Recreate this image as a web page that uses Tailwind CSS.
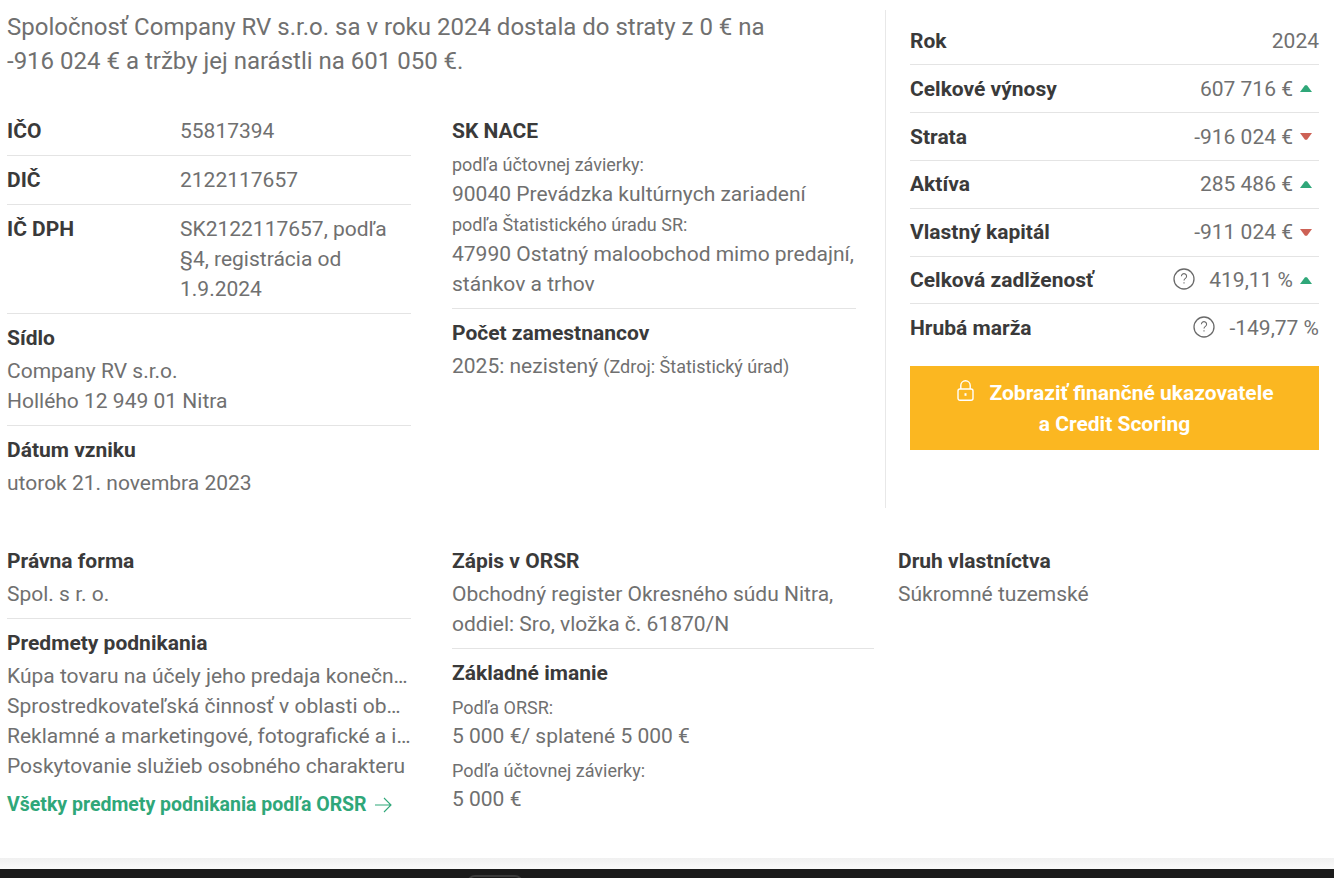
<!DOCTYPE html>
<html lang="sk">

<head>
  <meta charset="UTF-8">
  <meta name="viewport" content="width=device-width, initial-scale=1.0">
  <script src="https://cdn.jsdelivr.net/npm/@tailwindcss/browser@4"></script>
</head>

<body class="bg-white font-['Roboto',sans-serif] text-[21px] leading-[30px] text-[#707070] h-[878px] overflow-hidden">
  <div class="h-[858px] pl-[7px] pr-[15px]">
    <!-- top part -->
    <div class="flex pt-[10px] h-[508px]">
      <div class="w-[878px] shrink-0 border-r border-[#e8e8e8] box-content">
        <p class="text-[24px] leading-[34px] w-[800px]">Spoločnosť Company RV s.r.o. sa v roku 2024 dostala do straty z 0 € na -916 024 € a tržby jej narástli na 601 050 €.</p>
        <div class="flex mt-[29px]">
          <div class="w-[404px]">
            <div class="flex py-[9px] border-b border-[#e4e4e4]">
              <div class="w-[173px] shrink-0 font-bold text-[#3a3a3a]">IČO</div>
              <div>55817394</div>
            </div>
            <div class="flex py-[9px] border-b border-[#e4e4e4]">
              <div class="w-[173px] shrink-0 font-bold text-[#3a3a3a]">DIČ</div>
              <div>2122117657</div>
            </div>
            <div class="flex py-[9px] border-b border-[#e4e4e4]">
              <div class="w-[173px] shrink-0 font-bold text-[#3a3a3a]">IČ DPH</div>
              <div>SK2122117657, podľa §4, registrácia od 1.9.2024</div>
            </div>
            <div class="py-[9px] border-b border-[#e4e4e4]">
              <div class="font-bold text-[#3a3a3a] mb-[3px]">Sídlo</div>
              <div>Company RV s.r.o.<br>Hollého 12 949 01 Nitra</div>
            </div>
            <div class="py-[9px]">
              <div class="font-bold text-[#3a3a3a] mb-[3px]">Dátum vzniku</div>
              <div>utorok 21. novembra 2023</div>
            </div>
          </div>
          <div class="w-[404px] ml-[41px]">
            <div class="py-[9px] border-b border-[#e4e4e4]">
              <div class="font-bold text-[#3a3a3a] mb-[3px]">SK NACE</div>
              <div class="text-[18px] leading-[32px] -mb-[2px]">podľa účtovnej závierky:</div>
              <div>90040 Prevádzka kultúrnych zariadení</div>
              <div class="text-[18px] leading-[32px] -mb-[2px]">podľa Štatistického úradu SR:</div>
              <div>47990 Ostatný maloobchod mimo predajní, stánkov a trhov</div>
            </div>
            <div class="py-[9px]">
              <div class="font-bold text-[#3a3a3a] mb-[3px]">Počet zamestnancov</div>
              <div>2025: nezistený <span class="text-[18px]">(Zdroj: Štatistický úrad)</span></div>
            </div>
          </div>
        </div>
      </div>
      <div class="w-[409px] ml-[24px]">
        <div class="flex justify-between items-center h-[55px] pt-[7px] border-b border-[#e4e4e4]">
          <span class="font-bold text-[#3a3a3a]">Rok</span><span>2024</span>
        </div>
        <div class="flex justify-between items-center h-[48px] border-b border-[#e4e4e4]">
          <span class="font-bold text-[#3a3a3a]">Celkové výnosy</span>
          <span class="flex items-center">607 716 €
            <svg class="ml-[7px] mr-[7px]" width="12" height="7" viewBox="0 0 12 7"><path d="M5 .2h2L12 7H0Z" fill="#2fa779"/></svg>
          </span>
        </div>
        <div class="flex justify-between items-center h-[48px] border-b border-[#e4e4e4]">
          <span class="font-bold text-[#3a3a3a]">Strata</span>
          <span class="flex items-center">-916 024 €
            <svg class="ml-[7px] mr-[7px]" width="12" height="7" viewBox="0 0 12 7"><path d="M5 6.8h2L12 0H0Z" fill="#cd6155"/></svg>
          </span>
        </div>
        <div class="flex justify-between items-center h-[48px] pb-[1px] border-b border-[#e4e4e4]">
          <span class="font-bold text-[#3a3a3a]">Aktíva</span>
          <span class="flex items-center">285 486 €
            <svg class="ml-[7px] mr-[7px]" width="12" height="7" viewBox="0 0 12 7"><path d="M5 .2h2L12 7H0Z" fill="#2fa779"/></svg>
          </span>
        </div>
        <div class="flex justify-between items-center h-[48px] pb-[1px] border-b border-[#e4e4e4]">
          <span class="font-bold text-[#3a3a3a]">Vlastný kapitál</span>
          <span class="flex items-center">-911 024 €
            <svg class="ml-[7px] mr-[7px]" width="12" height="7" viewBox="0 0 12 7"><path d="M5 6.8h2L12 0H0Z" fill="#cd6155"/></svg>
          </span>
        </div>
        <div class="flex justify-between items-center h-[47px] border-b border-[#e4e4e4]">
          <span class="font-bold text-[#3a3a3a]">Celková zadlženosť</span>
          <span class="flex items-center">
            <svg class="mr-[14px] -mt-[3px]" width="22" height="22" viewBox="0 0 22 22" fill="none" stroke="#6a6a6a" stroke-width="1.3"><circle cx="11" cy="11" r="10"/><path d="M8.4 8.2a2.6 2.6 0 1 1 4 2.2c-.9.6-1.4 1-1.4 2.1" stroke-width="1.1"/><path d="M11 14.2v1.3" stroke-width="1.1"/></svg>
            419,11 %
            <svg class="ml-[7px] mr-[7px]" width="12" height="7" viewBox="0 0 12 7"><path d="M5 .2h2L12 7H0Z" fill="#2fa779"/></svg>
          </span>
        </div>
        <div class="flex justify-between items-center h-[48px]">
          <span class="font-bold text-[#3a3a3a]">Hrubá marža</span>
          <span class="flex items-center">
            <svg class="mr-[14px] -mt-[3px]" width="22" height="22" viewBox="0 0 22 22" fill="none" stroke="#6a6a6a" stroke-width="1.3"><circle cx="11" cy="11" r="10"/><path d="M8.4 8.2a2.6 2.6 0 1 1 4 2.2c-.9.6-1.4 1-1.4 2.1" stroke-width="1.1"/><path d="M11 14.2v1.3" stroke-width="1.1"/></svg>
            -149,77 %
          </span>
        </div>
        <div class="mt-[14px] bg-[#fbb721] text-white font-bold text-center h-[84px] pt-[12px] leading-[31px]">
          <svg class="inline-block ml-[2px] mr-[15px] align-[-1px]" width="17" height="21" viewBox="0 0 17 21" fill="none" stroke="#fff" stroke-width="1.4"><rect x="1" y="9" width="15" height="11.3" rx="2"/><path d="M3.8 9V5.5a4.7 4.7 0 0 1 9.4 0V9"/><path d="M8.5 13.2v2.6" stroke-width="2"/></svg>Zobraziť finančné ukazovatele<br>a Credit Scoring
        </div>
      </div>
    </div>

    <!-- bottom part -->
    <div class="flex mt-[29px]">
      <div class="w-[404px]">
        <div class="py-[9px] border-b border-[#e4e4e4]">
          <div class="font-bold text-[#3a3a3a] mb-[3px]">Právna forma</div>
          <div>Spol. s r. o.</div>
        </div>
        <div class="py-[9px]">
          <div class="font-bold text-[#3a3a3a] mb-[3px]">Predmety podnikania</div>
          <div class="truncate">Kúpa tovaru na účely jeho predaja konečnému spotrebiteľovi</div>
          <div class="truncate">Sprostredkovateľská činnosť v oblasti obchodu a služieb</div>
          <div class="truncate">Reklamné a marketingové, fotografické a iné služby</div>
          <div class="truncate">Poskytovanie služieb osobného charakteru</div>
          <div class="mt-[9px] text-[19.5px] font-bold text-[#2fa779] flex items-center">Všetky predmety podnikania podľa ORSR
            <svg class="ml-[8px]" width="17" height="16" viewBox="0 0 17 16" fill="none" stroke="#2fa779" stroke-width="1.1"><path d="M0 8H16M9 1l7 7-7 7"/></svg>
          </div>
        </div>
      </div>
      <div class="w-[422px] ml-[41px]">
        <div class="py-[9px] border-b border-[#e4e4e4]">
          <div class="font-bold text-[#3a3a3a] mb-[3px]">Zápis v ORSR</div>
          <div>Obchodný register Okresného súdu Nitra,<br>oddiel: Sro, vložka č. 61870/N</div>
        </div>
        <div class="py-[9px]">
          <div class="font-bold text-[#3a3a3a]">Základné imanie</div>
          <div class="text-[18px] leading-[26px] mt-[7px]">Podľa ORSR:</div>
          <div>5 000 €/ splatené 5 000 €</div>
          <div class="text-[18px] leading-[26px] mt-[7px]">Podľa účtovnej závierky:</div>
          <div>5 000 €</div>
        </div>
      </div>
      <div class="ml-[24px]">
        <div class="py-[9px]">
          <div class="font-bold text-[#3a3a3a] mb-[3px]">Druh vlastníctva</div>
          <div>Súkromné tuzemské</div>
        </div>
      </div>
    </div>
  </div>
  <div class="h-[11px] bg-linear-to-b from-[#f0f0f0] to-[#fafafa]"></div>
  <div class="relative h-[9px] bg-[#1b1b1b] overflow-hidden">
    <div class="absolute left-[467px] top-[6px] w-[56px] h-[10px] rounded-t-[8px] border-2 border-[#3a3a3a]"></div>
  </div>
</body>

</html>
